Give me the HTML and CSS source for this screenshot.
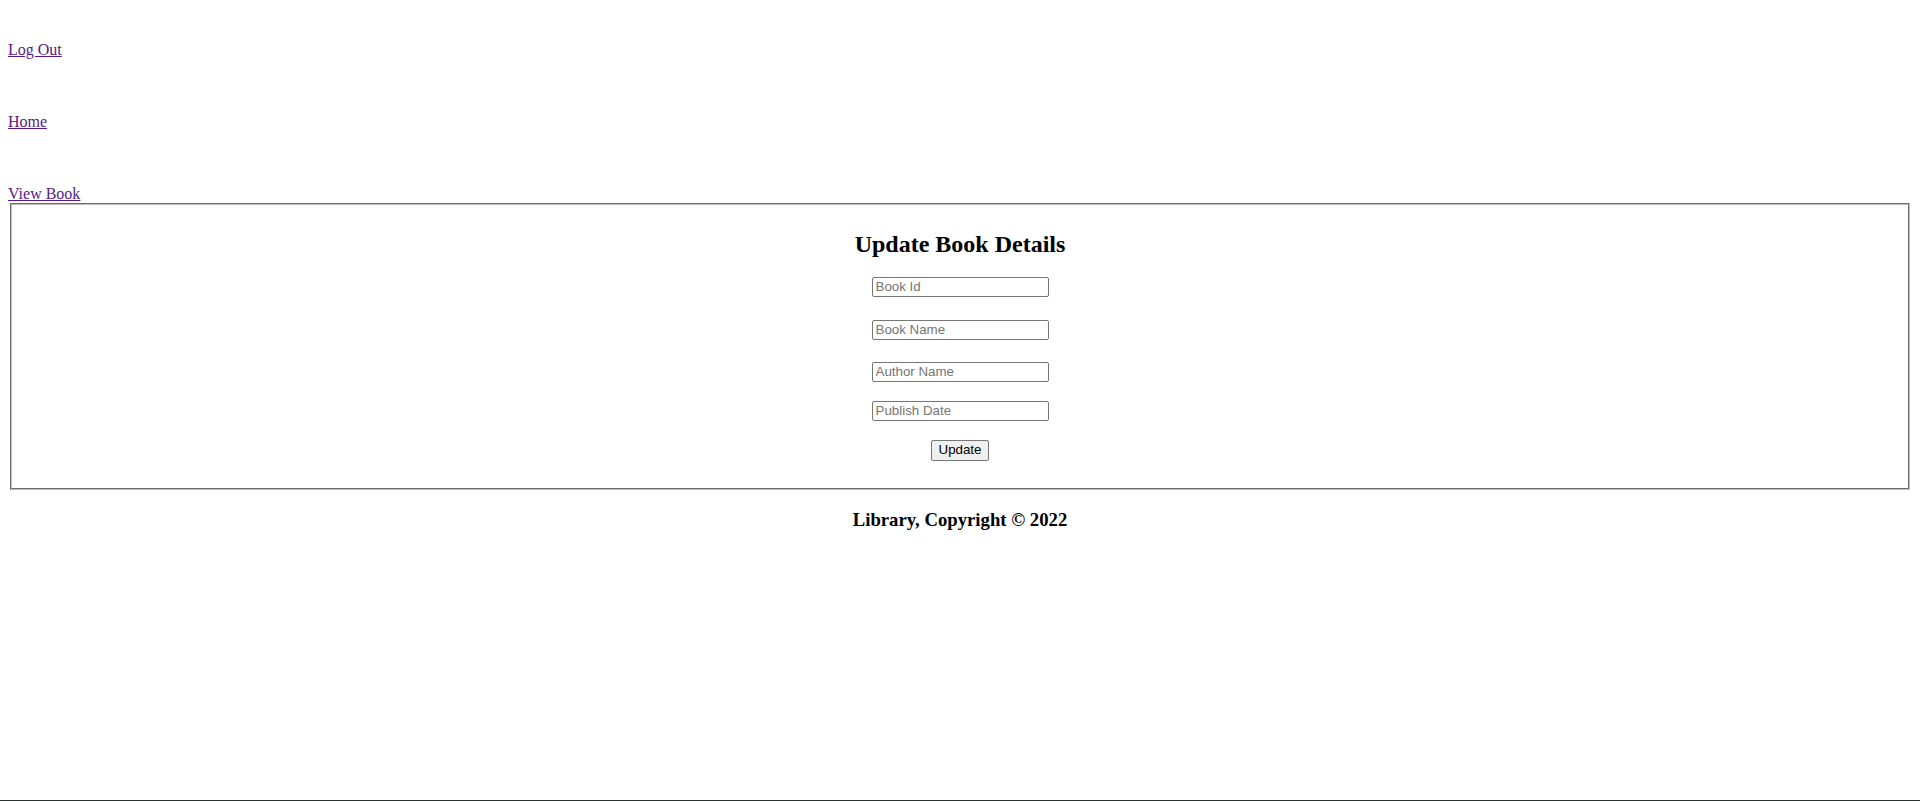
FILE: index.html
```html
<!DOCTYPE html>
<html lang="en">
<head>
<meta charset="utf-8">
<title>Update Book</title>
<link rel="stylesheet" href="styles.css">
</head>
<body>
<div class="page">
  <nav class="nav">
    <a class="nav-link" href="#">Log Out</a>
    <a class="nav-link" href="#">Home</a>
    <a class="nav-link" href="#">View Book</a>
  </nav>
  <fieldset class="panel">
    <h2 class="panel-title">Update Book Details</h2>
    <form class="form">
      <input class="field field-id" type="text" placeholder="Book Id">
      <input class="field field-name" type="text" placeholder="Book Name">
      <input class="field field-author" type="text" placeholder="Author Name">
      <input class="field field-date" type="text" placeholder="Publish Date">
      <button class="btn" type="button">Update</button>
    </form>
  </fieldset>
  <h3 class="footer">Library, Copyright © 2022</h3>
</div>
</body>
</html>
```
FILE: styles.css
```css
html, body {
  margin: 0;
  padding: 0;
  background: #ffffff;
}

body {
  font-family: "Liberation Serif", "Times New Roman", serif;
  font-size: 16px;
  color: #000000;
}

.page {
  box-sizing: border-box;
  min-height: 100vh;
  padding: 8px 8px 0 8px;
  border-bottom: 1px solid #25352f;
  overflow: hidden;
}

.nav {
  display: flex;
  flex-direction: column;
  align-items: flex-start;
  gap: 54px;
  padding-top: 33px;
}

.nav-link {
  color: #551a8b;
  text-decoration: underline;
  line-height: 18px;
}

.panel {
  margin: 0 2px;
  padding: 5.6px 12px 10px 12px;
  border: 2px groove rgb(192, 192, 192);
  min-width: 0;
}

.panel-title {
  text-align: center;
  font-size: 24px;
  font-weight: bold;
  margin: 19px 0 19px 0;
  line-height: 28px;
}

.form {
  display: flex;
  flex-direction: column;
  align-items: center;
  padding-bottom: 17px;
}

.field {
  box-sizing: border-box;
  width: 177px;
  height: 20px;
  padding: 1px 3px;
  border: 1px solid #767676;
  border-radius: 2px;
  font-family: "Liberation Sans", Arial, sans-serif;
  font-size: 13.33px;
  color: #000;
  background: #fff;
}

.field::placeholder {
  color: #757575;
}

.field-name {
  margin-top: 23px;
}

.field-author {
  margin-top: 22px;
}

.field-date {
  margin-top: 19px;
}

.btn {
  box-sizing: border-box;
  margin-top: 19px;
  width: 58px;
  height: 21px;
  padding: 0 6px 1px 6px;
  border: 1px solid #767676;
  border-radius: 2px;
  background: #efefef;
  font-family: "Liberation Sans", Arial, sans-serif;
  font-size: 13.33px;
  color: #000;
}

.footer {
  text-align: center;
  font-size: 18.72px;
  font-weight: bold;
  margin: 19px 0 18px 0;
}
```
